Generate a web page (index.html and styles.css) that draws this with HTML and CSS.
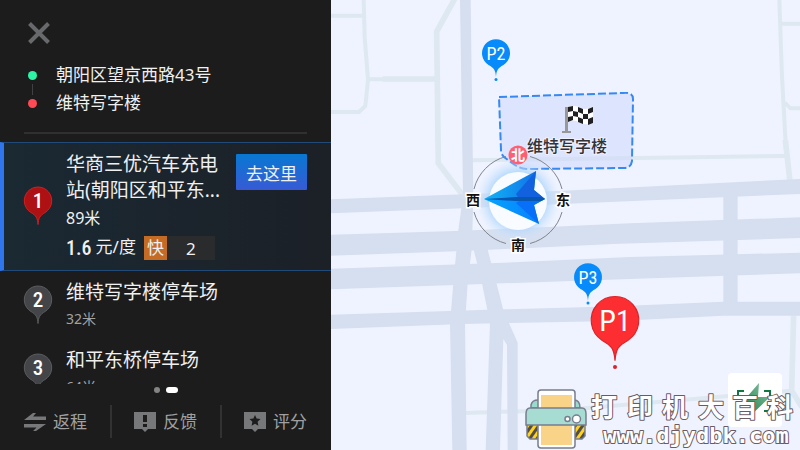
FILE: index.html
```html
<!DOCTYPE html>
<html lang="zh-CN">
<head>
<meta charset="utf-8">
<title>停车场推荐</title>
<link rel="stylesheet" href="styles.css">
</head>
<body>
<div class="app">
  <aside class="panel">
    <header class="head">
      <button class="close" type="button" aria-label="关闭">
        <svg width="22" height="22" viewBox="0 0 22 22"><path d="M1.5 1.5 20.500 20.500M20.500 1.500 1.500 20.500" stroke="#68696c" stroke-width="4"/></svg>
      </button>
      <ul class="route">
        <li class="stop start">朝阳区望京西路43号</li>
        <li class="stop end">维特写字楼</li>
      </ul>
    </header>

    <ol class="list">
      <li class="item selected">
        <svg class="pin" width="30" height="40" viewBox="0 0 30 40">
          <path d="M15 38.500C14.600 32 13 29.500 8 26.500A13.700 13.700 0 1 1 22 26.500C17 29.500 15.400 32 15 38.500Z" fill="#ad1114" stroke="#d0201f"/>
          <text class="pin-number" x="15" y="22">1</text>
        </svg>
        <div class="info">
          <h2 class="name">华商三优汽车充电<br>站(朝阳区和平东...</h2>
          <p class="distance">89米</p>
          <div class="price-row">
            <span class="price">1.6</span><span class="unit">元/度</span>
            <span class="fast">快</span><span class="count">2</span>
          </div>
        </div>
        <button class="go" type="button">去这里</button>
      </li>
      <li class="item">
        <svg class="pin" width="30" height="40" viewBox="0 0 30 40">
          <path d="M15 38.500C14.600 32 13 29.500 8 26.500A13.700 13.700 0 1 1 22 26.500C17 29.500 15.400 32 15 38.500Z" fill="#434549" stroke="#5a5c60"/>
          <text class="pin-number" x="15" y="22">2</text>
        </svg>
        <div class="info">
          <h2 class="name">维特写字楼停车场</h2>
          <p class="distance">32米</p>
        </div>
      </li>
      <li class="item">
        <svg class="pin" width="30" height="40" viewBox="0 0 30 40">
          <path d="M15 38.500C14.600 32 13 29.500 8 26.500A13.700 13.700 0 1 1 22 26.500C17 29.500 15.400 32 15 38.500Z" fill="#434549" stroke="#5a5c60"/>
          <text class="pin-number" x="15" y="22">3</text>
        </svg>
        <div class="info">
          <h2 class="name">和平东桥停车场</h2>
          <p class="distance">64米</p>
        </div>
      </li>
    </ol>

    <div class="pager"><i class="dot"></i><i class="dot current"></i></div>

    <footer class="actions">
      <button class="action" type="button">
        <svg width="22" height="20" viewBox="0 0 22 20" fill="#77787a"><path d="M0 8 9 1H12L9 4.500H22V8ZM22 12 12 19H9L12.500 15.500H0V12Z"/></svg>
        返程
      </button>
      <i class="rule"></i>
      <button class="action" type="button">
        <svg width="22" height="20" viewBox="0 0 22 20"><path d="M0 0H22V17H14L11 20 8 17H0Z" fill="#77787a"/><path d="M9 3H13V10H9ZM9 12H13V15H9Z" fill="#1c1c1c"/></svg>
        反馈
      </button>
      <i class="rule"></i>
      <button class="action" type="button">
        <svg width="22" height="20" viewBox="0 0 22 20"><path d="M0 0H22V17H14L11 20 8 17H0Z" fill="#77787a"/><path d="M11 3 12.600 6.600 16.500 7 13.600 9.700 14.400 13.700 11 11.700 7.600 13.700 8.400 9.700 5.500 7 9.400 6.600Z" fill="#1c1c1c"/></svg>
        评分
      </button>
    </footer>
  </aside>

  <main class="map">
    <svg class="canvas" viewBox="331 0 469 450" preserveAspectRatio="xMidYMid slice">
      <defs>
        <radialGradient id="glow"><stop offset=".6" stop-color="#a9d3fb"/><stop offset="1" stop-color="#cfe5ff" stop-opacity="0"/></radialGradient>
        <linearGradient id="wingTop" x1="0" x2="1"><stop offset="0" stop-color="#10b6f6"/><stop offset="1" stop-color="#1267e6"/></linearGradient>
        <linearGradient id="wingLow" x1="0" x2="1"><stop offset="0" stop-color="#06a5fb"/><stop offset="1" stop-color="#077cff"/></linearGradient>
        <linearGradient id="leaf" x1="1" y1="0" x2="0" y2="1"><stop offset="0" stop-color="#8ac5a5"/><stop offset="1" stop-color="#117642"/></linearGradient>
        <path id="marker" d="M0 24C-.5 17 -2 15 -7.500 12A14 14 0 1 1 7.500 12C2 15 .5 17 0 24Z"/>
        <pattern id="hazard" width="6" height="6" patternUnits="userSpaceOnUse" patternTransform="rotate(35)"><path d="M0 0H6V6H0Z" fill="#ffd21c"/><path d="M0 0H3V6H0Z" fill="#514c4d"/></pattern>
      </defs>

      <!-- Roads -->
      <g transform="translate(330 0) scale(.33333)">
        <g fill="none" stroke="#dee8f0" stroke-width="12" stroke-linejoin="round">
          <path d="M0 47H101M101 0 104 110 114 240 106 318 87 336H0M114 238H160M1356 71H1410M1364 308 1382 325H1410M425 481 1370 468"/>
          <path d="M1348 0 1356 230 1367 430M405 1239 700 1230 1385 1172" />
          <path d="M375 -5 320 95 325 490 402 590M158 237H320M1366 420 1380 545M1391 940 1385 1172 1415 1220" stroke-width="17"/>
        </g>
        <g fill="#d6dfef">
          <path d="M390 0H422L430 590 426 740 413 850 405 970 410 1350H367L360 970 370 850 385 690 399 590Z"/>
          <path d="M0 598 400 583 700 572 1410 537V582L750 610 400 625 0 640Z"/>
          <path d="M0 704 400 692 900 670 1410 652V714L850 732 400 753 0 767Z"/>
          <path d="M0 806 480 790 900 771 1410 758V820L900 837 400 854 0 868Z"/>
          <path d="M0 944 520 928 860 919 1180 905H1410V947H1180L860 963 400 972 0 987Z"/>
          <path d="M430 745H472L500 852 520 930 563 1028V1350H533L531 1035 520 1017 510 1350H467L480 970 456 850Z"/>
          <path d="M1180 580H1223V915H1180Z"/>
        </g>
      </g>

      <!-- Destination building -->
      <path d="M499 97 623 93Q633 92 633 99L632 161Q631 168 624 168L526 169Q520 169 512 163L504 157Q501 154 501 150Z" fill="#cbd5fb" fill-opacity=".5" stroke="#3688f3" stroke-width="2" stroke-dasharray="8 3"/>
      <g>
        <path d="M565 107H568V131H571V133H562V131H565Z" fill="#989898"/>
        <path d="M568 107Q573 105 579 107 584 111 593 107V123Q586 126 579 122 573 119 568 122Z" fill="#fff"/>
        <path d="M568 107 573 106V111L568 112ZM578 107 583 109V114L578 112ZM588 109 593 107V112L588 114ZM573 111 578 112V117L573 116ZM583 114 588 114V119L583 119ZM568 117 573 116V120L568 122ZM578 117 583 119V124L578 122ZM588 119 593 117V123L588 125Z" fill="#202023"/>
      </g>
      <text class="place" x="567" y="152">维特写字楼</text>

      <!-- Compass -->
      <circle cx="518" cy="200" r="42" fill="url(#glow)"/>
      <circle cx="518" cy="201" r="29" fill="#f8fbff"/>
      <path d="M530 156.500A45 45 0 0 1 562 189M562 212A45 45 0 0 1 530 243.500M506 243.500A45 45 0 0 1 474 212M474 189A45 45 0 0 1 506 156.500" fill="none" stroke="#7f858d" stroke-width="1"/>
      <path d="M484 199 536 171 534 190 545 199Z" fill="url(#wingTop)"/>
      <path d="M484 199H545L534 205 539 224Z" fill="url(#wingLow)"/>
      <path d="M536 171 516 194 519 199 545 199 534 190Z" fill="#1262df"/>
      <path d="M519 201 516 203 539 224 534 205 545 199Z" fill="#0870f8"/>
      <path d="M484 199 516 197H541L545 199 541 201H516Z" fill="#0756b0"/>
      <circle cx="518" cy="155" r="9.500" fill="#fd5f74"/>
      <text class="north" x="518" y="160">北</text>
      <text class="bearing" x="473" y="205">西</text>
      <text class="bearing" x="563" y="205">东</text>
      <text class="bearing" x="518" y="250">南</text>

      <!-- Parking pins -->
      <g transform="translate(496 53)"><use href="#marker" fill="#078bfa"/><circle cy="26.500" r="1.500" fill="#078bfa"/><text class="pin-label" x="0" y="7">P2</text></g>
      <g transform="translate(588 277)"><use href="#marker" fill="#078bfa"/><circle cy="26" r="1.500" fill="#078bfa"/><text class="pin-label" x="0" y="7">P3</text></g>
      <g transform="translate(615 320)"><use href="#marker" transform="scale(1.700)" fill="#fc2e32" stroke="#dc2228" stroke-width=".7"/><circle cy="47" r="2" fill="#dc2228"/><text class="pin-label large" x="0" y="11">P1</text></g>

      <!-- Charging badge -->
      <rect x="728" y="373" width="54" height="54" rx="4" fill="#fff"/>
      <path d="M738 399V391H744M764 391H770V396M738 406V411H744M764 411H770V404" fill="none" stroke="#117642" stroke-width="2"/>
      <path d="M759 383 740 405H750L749 417 770 397H758Z" fill="url(#leaf)"/>

      <!-- Printer logo -->
      <g stroke="#777e8d" stroke-width="1.500">
        <path d="M531 408V405Q532 400 538 400H574Q580 400 580 408Z" fill="#9bd8cd"/>
        <path d="M527 424H538V439H530L527 436ZM574 424H585V436L582 439H574Z" fill="url(#hazard)"/>
        <rect x="538" y="390" width="37" height="58" rx="3" fill="#fff"/>
        <path d="M541 395H572V445H541Z" fill="#f9d387" stroke="none"/>
        <path d="M530 408H582Q586 408 586 414V425H526V414Q526 408 530 408Z" fill="#a7dcd3"/>
        <circle cx="567.500" cy="419" r="2.500" fill="#fff"/><circle cx="576.500" cy="419" r="4" fill="#fff"/>
      </g>
      <text class="brand" y="417" x="604 640 675 711 745 780">打印机大百科</text>
      <text class="site" y="443" x="696">www.djydbk.com</text>
    </svg>
  </main>
</div>
</body>
</html>
```

FILE: styles.css
```css
* { box-sizing: border-box; }

body {
  margin: 0;
  background: #eff3ff;
  color: #f0f0f0;
  font-family: "Noto Sans", "Noto Sans CJK SC", sans-serif;
  font-size: 17px;
}

button {
  margin: 0;
  padding: 0;
  border: 0;
  background: none;
  color: inherit;
  font: inherit;
  cursor: pointer;
}

svg { display: block; }
h2, p, ul, ol { margin: 0; padding: 0; font-weight: 400; }
li { list-style: none; }

.app {
  display: grid;
  grid-template-columns: 331fr 469fr;
  height: 100vh;
}

.panel {
  display: flex;
  flex-direction: column;
  min-width: 0;
  min-height: 0;
  background: #1c1c1c;
}

.head {
  margin: 0 24px 8px;
  padding: 22px 4px 15px;
  border-bottom: 2px solid #303031;
}

.close { display: block; }
.route { margin-top: 17px; }

.stop {
  position: relative;
  padding-left: 28px;
  line-height: 28px;
}

.stop::before {
  content: "";
  position: absolute;
  left: 0;
  top: 10px;
  width: 9px;
  height: 9px;
  border-radius: 50%;
  background: #2cf5a5;
}

.end::before { background: #ff4a56; }

.start::after {
  content: "";
  position: absolute;
  left: 4px;
  top: 23px;
  width: 1px;
  height: 11px;
  background: #414143;
}

.list {
  flex: 1;
  min-height: 0;
  overflow: hidden;
}

.item {
  display: flex;
  align-items: flex-start;
  padding: 8px 24px 7px 23px;
}

.pin { flex: none; margin: 6px 13px 0 0; }
.info { flex: 1; min-width: 0; white-space: nowrap; }
.name { font-size: 19px; line-height: 26px; }
.distance { color: #a2a2a2; font-size: 14px; line-height: 27px; }

.pin-number {
  fill: #fff;
  font: 500 21px "Roboto Condensed", Roboto, sans-serif;
  text-anchor: middle;
}

.selected {
  padding: 8px 24px 10px 19px;
  border: solid #214a78;
  border-width: 1px 0;
  border-left: 4px solid #2f76ee;
  background: linear-gradient(90deg, #1a2933, #1c2027);
}

.selected .pin { margin-top: 35px; }
.selected .distance { color: #f0f0f0; font-size: 16px; line-height: 30px; }

.price-row {
  display: flex;
  height: 24px;
  margin-top: 3px;
  line-height: 24px;
}

.price {
  margin-right: 4px;
  font: 500 20px/24px "Roboto Condensed", Roboto, sans-serif;
}

.unit { margin-right: 8px; line-height: 22px; }
.fast { width: 23px; background: #c46b25; text-align: center; }
.count { width: 48px; background: #2a2b2d; text-align: center; line-height: 26px; }

.go {
  flex: none;
  width: 71px;
  height: 36px;
  margin-top: 3px;
  border-radius: 1px;
  background: linear-gradient(#0878d2, #375ad5);
}

.pager {
  display: flex;
  justify-content: center;
  align-items: center;
  gap: 6px;
  height: 12px;
}

.dot { width: 6px; height: 6px; border-radius: 3px; background: #848484; }
.current { width: 12px; background: #fff; }

.actions {
  display: flex;
  justify-content: space-between;
  align-items: center;
  padding: 9px 24px 12px;
  color: #a0a0a0;
}

.action {
  display: flex;
  align-items: center;
  gap: 7px;
  line-height: 33px;
}

.rule { width: 2px; height: 33px; background: #323233; }

.map { min-width: 0; min-height: 0; overflow: hidden; }
.canvas { width: 100%; height: 100%; }

.canvas text {
  font-family: "Noto Sans CJK SC", sans-serif;
  font-weight: bold;
  text-anchor: middle;
}

.canvas .place {
  fill: #333336;
  stroke: #eef2ff;
  stroke-width: 2px;
  paint-order: stroke;
  font-size: 16px;
  font-weight: 500;
}

.canvas .bearing {
  fill: #111;
  stroke: #fff;
  stroke-width: 3px;
  paint-order: stroke;
  font-size: 14px;
}

.canvas .north { fill: #fff; font-size: 14px; }

.canvas .pin-label {
  fill: #fff;
  font-family: "Roboto Condensed", Roboto, sans-serif;
  font-size: 18px;
  font-weight: 400;
}

.canvas .large { font-size: 30px; }

.canvas .brand,
.canvas .site {
  fill: #fff;
  stroke: #6b5a60;
  stroke-width: 2px;
  stroke-linejoin: round;
  paint-order: stroke;
}

.canvas .brand { font-size: 26px; }
.canvas .site { font-family: "DejaVu Sans Mono", monospace; font-size: 22px; }
```
